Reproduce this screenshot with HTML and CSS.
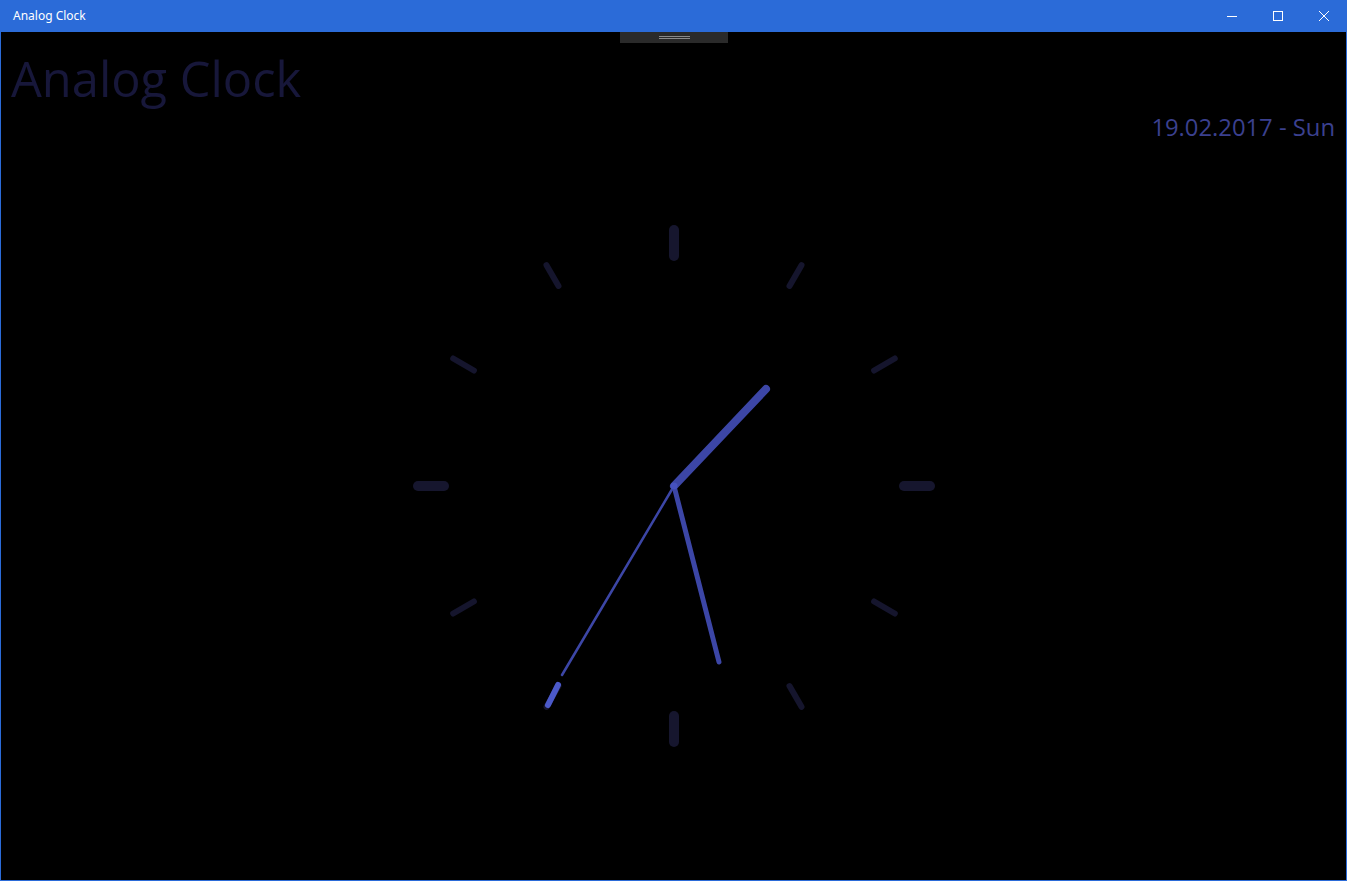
FILE: index.html
```html
<!DOCTYPE html>
<html>
<head>
<meta charset="utf-8">
<title>Analog Clock</title>
<link rel="stylesheet" href="styles.css">
</head>
<body>
<div class="window">
  <div class="titlebar">
    <span class="title">Analog Clock</span>
    <div class="controls">
      <span class="ctl"><svg width="12" height="12" viewBox="0 0 12 12"><path d="M1 6.5H11" stroke="#fff" stroke-width="1"/></svg></span>
      <span class="ctl"><svg width="12" height="12" viewBox="0 0 12 12"><rect x="1.5" y="1.5" width="9" height="9" fill="none" stroke="#fff" stroke-width="1"/></svg></span>
      <span class="ctl"><svg width="12" height="12" viewBox="0 0 12 12"><path d="M1 1L11 11M11 1L1 11" stroke="#fff" stroke-width="1"/></svg></span>
    </div>
  </div>
  <div class="content">
    <div class="handle"><span></span><span></span></div>
    <h1 class="app-title">Analog Clock</h1>
    <div class="date">19.02.2017 - Sun</div>
    <div class="clock-wrap">
      <svg class="clock" width="540" height="540" viewBox="-270 -270 540 540">
        <g class="major" stroke-linecap="round">
          <line x1="0" y1="-230" x2="0" y2="-256"/>
          <line x1="230" y1="0" x2="256" y2="0"/>
          <line x1="0" y1="230" x2="0" y2="256"/>
          <line x1="-230" y1="0" x2="-256" y2="0"/>
        </g>
        <g class="minor" stroke-linecap="round">
          <line x1="115.5" y1="-200.1" x2="127.5" y2="-220.8"/>
          <line x1="200.1" y1="-115.5" x2="220.8" y2="-127.5"/>
          <line x1="200.1" y1="115.5" x2="220.8" y2="127.5"/>
          <line x1="115.5" y1="200.1" x2="127.5" y2="220.8"/>
          <line x1="-115.5" y1="200.1" x2="-127.5" y2="220.8"/>
          <line x1="-200.1" y1="115.5" x2="-220.8" y2="127.5"/>
          <line x1="-200.1" y1="-115.5" x2="-220.8" y2="-127.5"/>
          <line x1="-115.5" y1="-200.1" x2="-127.5" y2="-220.8"/>
        </g>
        <g class="hands" stroke-linecap="round">
          <line class="hour" x1="0" y1="0" x2="92" y2="-97"/>
          <line class="minute" x1="0" y1="0" x2="45" y2="176"/>
          <line class="second" x1="0" y1="0" x2="-112" y2="189"/>
          <line class="second-tip" x1="-116" y1="199" x2="-126" y2="219"/>
          <circle class="pin" cx="0" cy="0" r="3.5"/>
        </g>
      </svg>
    </div>
  </div>
</div>
</body>
</html>
```
FILE: styles.css
```css
html, body {
  margin: 0;
  padding: 0;
  background: #000;
}
.window {
  width: 1347px;
  height: 881px;
  box-sizing: border-box;
  border: 1px solid #2b6bd8;
  border-top: none;
  display: flex;
  flex-direction: column;
  background: #000;
  overflow: hidden;
}
.titlebar {
  height: 32px;
  margin: 0 -1px;
  background: #2b6bd8;
  display: flex;
  align-items: center;
  justify-content: space-between;
  flex-shrink: 0;
}
.title {
  color: #fff;
  font-family: "Noto Sans", "Open Sans", sans-serif;
  font-size: 12px;
  padding-left: 13px;
  padding-bottom: 1px;
}
.controls {
  display: flex;
  height: 32px;
}
.ctl {
  width: 46px;
  display: flex;
  align-items: center;
  justify-content: center;
}
.content {
  position: relative;
  flex: 1;
  display: flex;
  flex-direction: column;
}
.handle {
  position: absolute;
  left: 619px;
  top: 0;
  width: 108px;
  height: 11px;
  background: #2a2a2a;
  display: flex;
  flex-direction: column;
  align-items: center;
  justify-content: center;
  gap: 1px;
}
.handle span {
  display: block;
  width: 31px;
  height: 1px;
  background: #8a8a8a;
}
.app-title {
  margin: 14px 0 0 10px;
  font-family: "Open Sans", "Noto Sans", sans-serif;
  font-weight: 400;
  font-size: 48.8px;
  line-height: 64px;
  color: #17173a;
}
.date {
  margin-top: 1px;
  text-align: right;
  padding-right: 11px;
  font-family: "Open Sans", "Noto Sans", sans-serif;
  font-size: 23.8px;
  line-height: 32px;
  color: #3b408f;
}
.clock-wrap {
  display: flex;
  justify-content: center;
  margin-top: 73px;
}
.clock {
  display: block;
}
.major line {
  stroke: #16162e;
  stroke-width: 10;
}
.minor line {
  stroke: #15152d;
  stroke-width: 6;
}
.hour {
  stroke: #3c46a6;
  stroke-width: 8;
}
.minute {
  stroke: #3c46a6;
  stroke-width: 5;
}
.second {
  stroke: #3c46a6;
  stroke-width: 2.5;
}
.second-tip {
  stroke: #4b59c9;
  stroke-width: 6;
}
.pin {
  fill: #4652bf;
}
```
